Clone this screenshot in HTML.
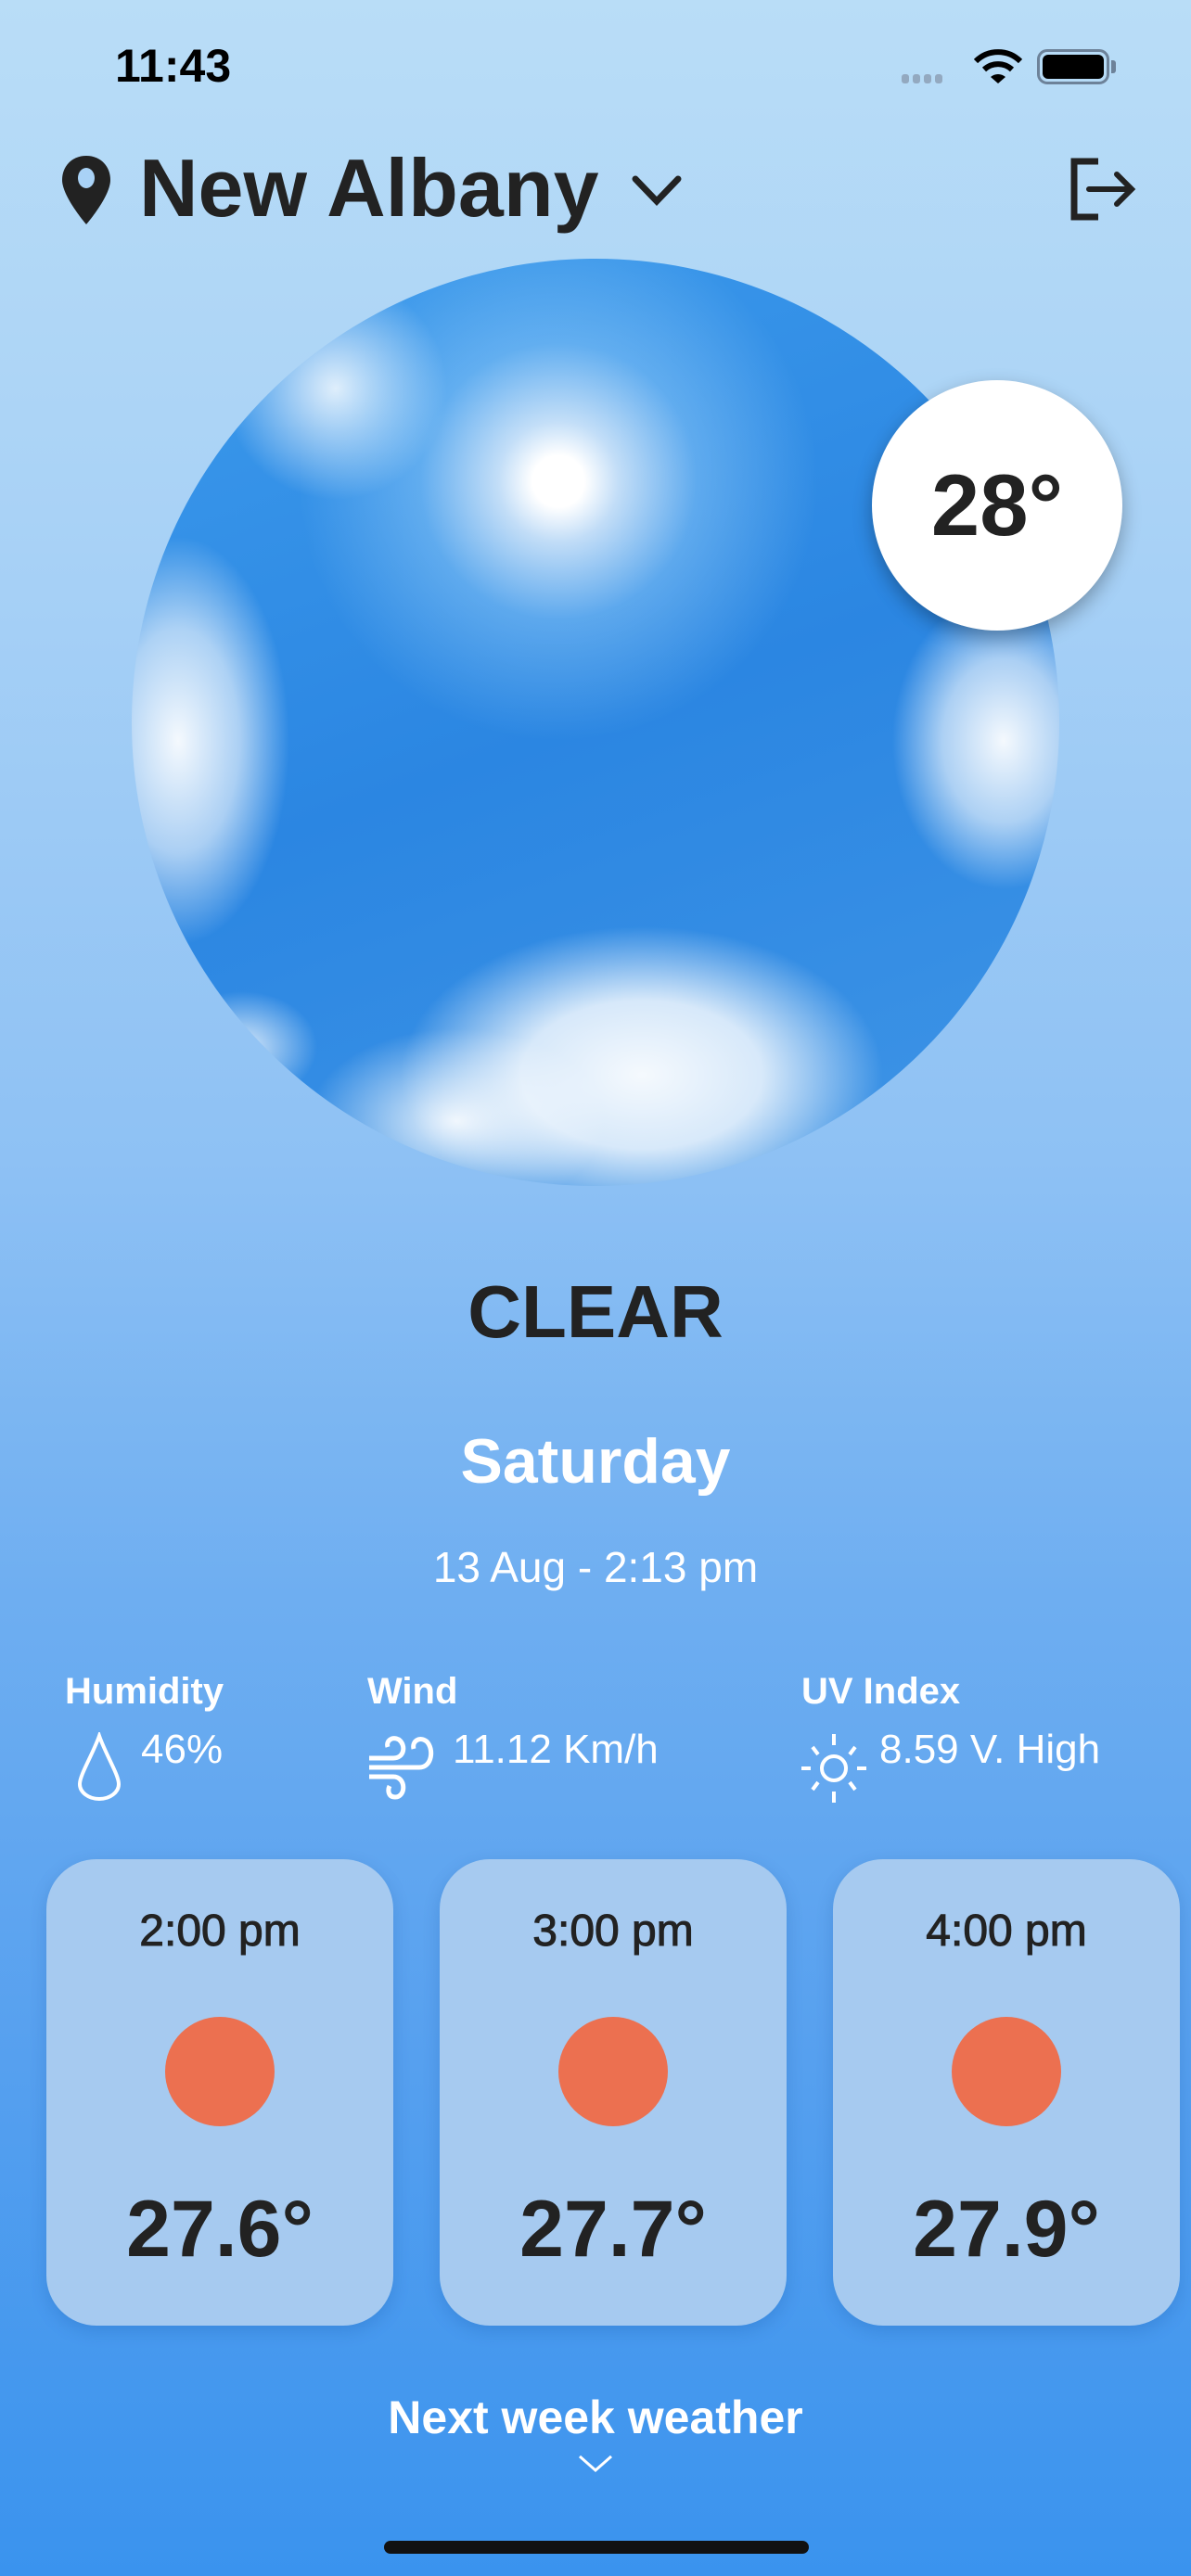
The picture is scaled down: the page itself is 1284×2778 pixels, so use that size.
<!DOCTYPE html>
<html><head><meta charset="utf-8"><style>
*{margin:0;padding:0;box-sizing:border-box}
body{width:1284px;height:2778px;overflow:hidden;position:relative;font-family:"Liberation Sans",sans-serif;
background:linear-gradient(180deg,#B9DDF7 0%,#A9D2F6 20%,#8EC1F4 45%,#6EAEF1 62%,#56A0EF 80%,#3A93EE 100%);}
.a{position:absolute}
.sky{left:142px;top:279px;width:1000px;height:1000px;border-radius:50%;overflow:hidden;
background:
radial-gradient(circle at 46% 24%,#fff 0,#fff 3%,rgba(255,255,255,.7) 7%,rgba(180,225,255,.35) 16%,rgba(120,190,250,0) 30%),
radial-gradient(ellipse 26% 16% at 55% 88%,rgba(255,255,255,.95) 0,rgba(255,255,255,.8) 50%,rgba(255,255,255,0) 100%),
radial-gradient(ellipse 16% 10% at 35% 93%,rgba(255,255,255,.9) 0,rgba(255,255,255,0) 100%),
radial-gradient(ellipse 12% 16% at 94% 52%,rgba(255,255,255,.95) 0,rgba(255,255,255,.6) 55%,rgba(255,255,255,0) 100%),
radial-gradient(ellipse 12% 22% at 5% 52%,rgba(255,255,255,.95) 0,rgba(255,255,255,.6) 55%,rgba(255,255,255,0) 100%),
radial-gradient(ellipse 12% 12% at 22% 14%,rgba(255,255,255,.85) 0,rgba(255,255,255,0) 100%),
radial-gradient(ellipse 8% 6% at 12% 85%,rgba(255,255,255,.8) 0,rgba(255,255,255,0) 100%),
linear-gradient(160deg,#3D9BEC 0%,#2B86E2 50%,#3F95E6 100%);}
.temp{left:940px;top:410px;width:270px;height:270px;border-radius:50%;background:#fff;box-shadow:0 8px 20px rgba(0,0,0,.3);
font-size:94px;font-weight:bold;color:#222;text-align:center;line-height:270px}
.c{left:0;width:1284px;text-align:center}
.lbl{font-size:40px;font-weight:bold;color:#fff}
.val{font-size:44px;color:#fff}
.card{top:2005px;width:374px;height:503px;border-radius:54px;background:#A6CAF0;box-shadow:0 6px 18px rgba(0,60,140,.18)}
.card .t{position:absolute;top:50px;width:100%;text-align:center;font-size:48px;color:#222;-webkit-text-stroke:1px #222}
.card .o{position:absolute;left:128px;top:170px;width:118px;height:118px;border-radius:50%;background:#EC7050}
.card .d{position:absolute;top:350px;width:100%;text-align:center;font-size:86px;font-weight:bold;color:#222}
</style></head><body>
<div class="a" style="left:124px;top:42px;font-size:50px;font-weight:bold;color:#000">11:43</div>
<div class="a" style="left:972px;top:80px;width:60px;height:10px">
<span class="a" style="left:0;top:0;width:8px;height:10px;border-radius:3px;background:#93a9c0"></span>
<span class="a" style="left:12px;top:0;width:8px;height:10px;border-radius:3px;background:#93a9c0"></span>
<span class="a" style="left:24px;top:0;width:8px;height:10px;border-radius:3px;background:#93a9c0"></span>
<span class="a" style="left:36px;top:0;width:8px;height:10px;border-radius:3px;background:#93a9c0"></span></div>
<svg class="a" style="left:1050px;top:52px" width="52" height="40" viewBox="0 0 52 40"><path d="M2 14 A34 34 0 0 1 50 14" stroke="#000" stroke-width="6" fill="none"/><path d="M11 23 A22 22 0 0 1 41 23" stroke="#000" stroke-width="6" fill="none"/><path d="M18 31 L26 38 L34 31 A12 12 0 0 0 18 31Z" fill="#000"/></svg>
<div class="a" style="left:1118px;top:53px;width:78px;height:38px;border:3px solid #6d8299;border-radius:11px"><div style="margin:3px;height:26px;background:#000;border-radius:6px"></div></div>
<div class="a" style="left:1198px;top:65px;width:5px;height:14px;background:#6d8299;border-radius:0 3px 3px 0"></div>

<svg class="a" style="left:64px;top:166px" width="58" height="78" viewBox="0 0 58 78"><path d="M29 2C13 2 3 14 3 28c0 18 26 48 26 48s26-30 26-48C55 14 45 2 29 2z" fill="#222"/><ellipse cx="29" cy="26" rx="9" ry="11" fill="#A9D2F6"/></svg>
<div class="a" style="left:150px;top:152px;font-size:88px;font-weight:bold;color:#222;letter-spacing:0px">New Albany</div>
<svg class="a" style="left:680px;top:188px" width="56" height="36" viewBox="0 0 56 36"><path d="M5 5 L28 29 L51 5" stroke="#222" stroke-width="7" fill="none" stroke-linecap="round"/></svg>
<svg class="a" style="left:1150px;top:170px" width="80" height="68" viewBox="0 0 80 68"><path d="M34 4H8v60h26" stroke="#222" stroke-width="7" fill="none"/><path d="M24 34H70M54 18L70 34L54 50" stroke="#222" stroke-width="6" fill="none" stroke-linecap="round"/></svg>

<div class="a sky"></div>
<div class="a temp">28°</div>

<div class="a c" style="top:1369px;font-size:80px;font-weight:bold;color:#222">CLEAR</div>
<div class="a c" style="top:1537px;font-size:68px;font-weight:bold;color:#fff">Saturday</div>
<div class="a c" style="top:1663px;font-size:46px;color:#fff">13 Aug - 2:13 pm</div>

<div class="a lbl" style="left:70px;top:1802px">Humidity</div>
<div class="a lbl" style="left:396px;top:1802px">Wind</div>
<div class="a lbl" style="left:864px;top:1802px">UV Index</div>
<svg class="a" style="left:78px;top:1868px" width="58" height="74" viewBox="0 0 58 74"><path d="M29 4C22 24 8 46 8 56a21 16 0 0 0 42 0C50 46 36 24 29 4z" stroke="#fff" stroke-width="4" fill="none"/></svg>
<div class="a val" style="left:152px;top:1862px">46%</div>
<svg class="a" style="left:394px;top:1866px" width="80" height="76" viewBox="0 0 80 76"><path d="M4 30H30C42 30 44 16 36 10 28 6 22 12 24 18M4 40H58C72 40 74 20 66 12 58 6 50 12 52 20M4 50H30C44 50 44 72 32 72 24 72 24 64 26 60" stroke="#fff" stroke-width="5" fill="none"/></svg>
<div class="a val" style="left:488px;top:1862px">11.12 Km/h</div>
<svg class="a" style="left:862px;top:1866px" width="74" height="78" viewBox="0 0 74 78"><circle cx="37" cy="41" r="13" stroke="#fff" stroke-width="4" fill="none"/><path d="M37 4V16M37 66V78M2 41H12M62 41H72M14 18L20 26M60 18L54 26M14 64L20 56M60 64L54 56" stroke="#fff" stroke-width="4"/></svg>
<div class="a val" style="left:948px;top:1862px">8.59 V. High</div>

<div class="a card" style="left:50px"><div class="t">2:00 pm</div><div class="o"></div><div class="d">27.6°</div></div>
<div class="a card" style="left:474px"><div class="t">3:00 pm</div><div class="o"></div><div class="d">27.7°</div></div>
<div class="a card" style="left:898px"><div class="t">4:00 pm</div><div class="o"></div><div class="d">27.9°</div></div>

<div class="a c" style="top:2578px;font-size:50px;font-weight:bold;color:#fff">Next week weather</div>
<svg class="a" style="left:622px;top:2646px" width="40" height="22" viewBox="0 0 40 22"><path d="M3 3L20 18L37 3" stroke="#fff" stroke-width="3" fill="none"/></svg>
<div class="a" style="left:414px;top:2740px;width:458px;height:14px;border-radius:7px;background:#111"></div>
</body></html>
